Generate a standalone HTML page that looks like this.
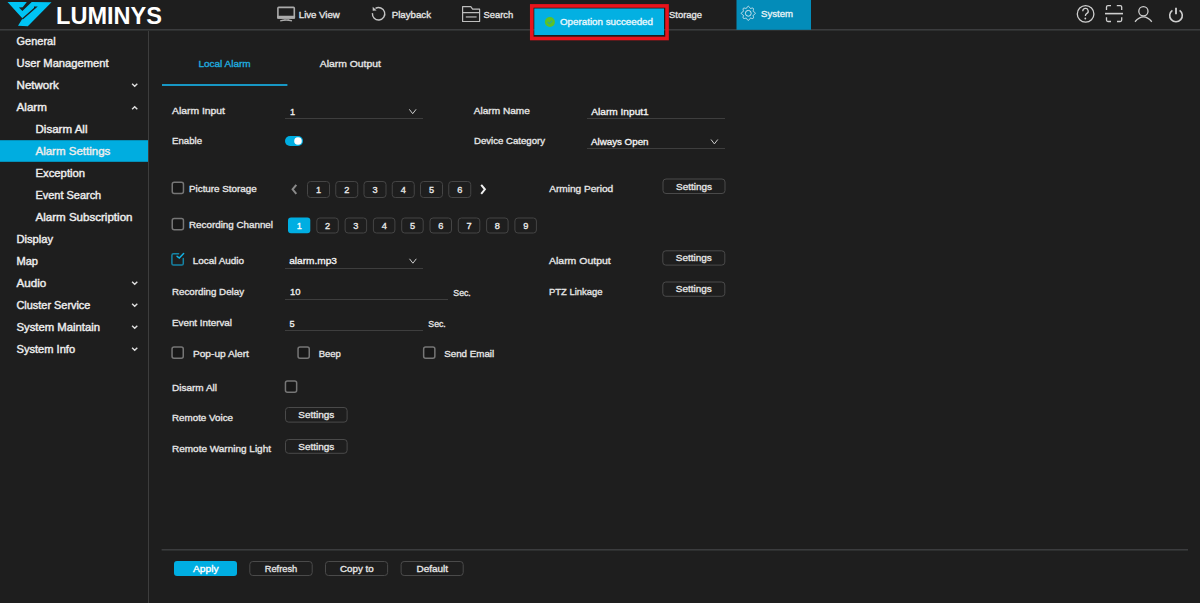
<!DOCTYPE html>
<html><head><meta charset="utf-8"><title>Alarm Settings</title>
<style>html,body{margin:0;padding:0;background:#1e1e1e;overflow:hidden;width:1200px;height:603px}
svg{display:block} text{font-family:"Liberation Sans",sans-serif}</style></head>
<body><svg width="1200" height="603" viewBox="0 0 1200 603">
<rect x="0" y="0" width="1200" height="603" fill="#1e1e1e"/>
<rect x="0" y="29" width="1200" height="1" fill="#3b3c3e"/>
<rect x="0" y="30" width="1200" height="1" fill="#2d2f2f"/>
<rect x="148" y="31" width="1" height="572" fill="#3d3d3d"/>
<path d="M7.5,2.1 L26.8,2.1 L22.7,7.2 L18.9,7.4 L22.4,10.9 L31.7,2.1 L51.5,2.2 L27.8,26.3 L18,25.8 L22.5,18.6 Z" fill="#00c3f4"/>
<path d="M34,7.1 L36,7.1 L22.4,18.9" fill="none" stroke="#1e1e1e" stroke-width="1.3"/>
<text x="56" y="23.8" font-size="23.4" fill="#ffffff" textLength="106" lengthAdjust="spacingAndGlyphs" font-weight="bold">LUMINYS</text>
<g fill="none" stroke="#ababab"><rect x="277.9" y="7.4" width="16.4" height="10.6" rx="0.8" stroke-width="1.6"/><path d="M280.2,20.8 Q286.1,19.2 292,20.8" stroke-width="1.3"/></g>
<rect x="277.1" y="15.7" width="18" height="3" fill="#ababab" rx="0.8"/>
<rect x="284.2" y="18.4" width="1.6" height="1.4" fill="#9a9a9a"/>
<rect x="287.4" y="18.4" width="1.6" height="1.4" fill="#9a9a9a"/>
<text x="298.8" y="17.9" font-size="9.6" fill="#e6e6e6" textLength="41" lengthAdjust="spacingAndGlyphs" stroke="#e6e6e6" stroke-width="0.32">Live View</text>
<path d="M375.5,8.43 A6.2,6.2 0 1 1 372.43,13.15" fill="none" stroke="#c4c4c4" stroke-width="1.4"/>
<path d="M372.7,6.8 L372.7,10.8 L376.6,10.5 Z" fill="#c4c4c4"/>
<text x="391.7" y="17.9" font-size="9.6" fill="#e6e6e6" textLength="39.3" lengthAdjust="spacingAndGlyphs" stroke="#e6e6e6" stroke-width="0.32">Playback</text>
<path d="M462.6,21.5 L462.6,6.6 L470.8,6.6 L472.6,9.2 L479.6,9.2 L479.6,21.5 Z M462.6,12.6 L479.6,12.6" fill="none" stroke="#bdbdbd" stroke-width="1.2" stroke-linejoin="round"/>
<rect x="465.8" y="16.3" width="10.8" height="1.3" fill="#b0b0b0"/>
<text x="483.5" y="17.9" font-size="9.6" fill="#e6e6e6" textLength="29.8" lengthAdjust="spacingAndGlyphs" stroke="#e6e6e6" stroke-width="0.32">Search</text>
<text x="669" y="17.8" font-size="9.6" fill="#e6e6e6" textLength="33" lengthAdjust="spacingAndGlyphs" stroke="#e6e6e6" stroke-width="0.32">Storage</text>
<rect x="736.5" y="0" width="74.5" height="29.8" fill="#038cb9"/>
<g fill="none" stroke="#cfe6ef" stroke-width="1"><circle cx="748.3" cy="13.3" r="2.9"/><path d="M755.30,13.30 L755.17,13.75 L754.82,14.16 L754.33,14.50 L753.83,14.78 L753.43,15.04 L753.20,15.33 L753.16,15.69 L753.26,16.16 L753.41,16.72 L753.52,17.30 L753.48,17.84 L753.25,18.25 L752.84,18.48 L752.30,18.52 L751.72,18.41 L751.16,18.26 L750.69,18.16 L750.33,18.20 L750.04,18.43 L749.78,18.83 L749.50,19.33 L749.16,19.82 L748.75,20.17 L748.30,20.30 L747.85,20.17 L747.44,19.82 L747.10,19.33 L746.82,18.83 L746.56,18.43 L746.27,18.20 L745.91,18.16 L745.44,18.26 L744.88,18.41 L744.30,18.52 L743.76,18.48 L743.35,18.25 L743.12,17.84 L743.08,17.30 L743.19,16.72 L743.34,16.16 L743.44,15.69 L743.40,15.33 L743.17,15.04 L742.77,14.78 L742.27,14.50 L741.78,14.16 L741.43,13.75 L741.30,13.30 L741.43,12.85 L741.78,12.44 L742.27,12.10 L742.77,11.82 L743.17,11.56 L743.40,11.27 L743.44,10.91 L743.34,10.44 L743.19,9.88 L743.08,9.30 L743.12,8.76 L743.35,8.35 L743.76,8.12 L744.30,8.08 L744.88,8.19 L745.44,8.34 L745.91,8.44 L746.27,8.40 L746.56,8.17 L746.82,7.77 L747.10,7.27 L747.44,6.78 L747.85,6.43 L748.30,6.30 L748.75,6.43 L749.16,6.78 L749.50,7.27 L749.78,7.77 L750.04,8.17 L750.33,8.40 L750.69,8.44 L751.16,8.34 L751.72,8.19 L752.30,8.08 L752.84,8.12 L753.25,8.35 L753.48,8.76 L753.52,9.30 L753.41,9.88 L753.26,10.44 L753.16,10.91 L753.20,11.27 L753.43,11.56 L753.83,11.82 L754.33,12.10 L754.82,12.44 L755.17,12.85 Z"/></g>
<text x="761" y="17.4" font-size="9.4" fill="#e8f4f8" textLength="32" lengthAdjust="spacingAndGlyphs" stroke="#e8f4f8" stroke-width="0.32">System</text>
<rect x="531.75" y="5.9" width="135.3" height="32.6" fill="none" stroke="#e8141c" stroke-width="3.6"/>
<rect x="534.3" y="8.5" width="129.7" height="26.5" fill="#03b0e2"/>
<circle cx="549.9" cy="22" r="5" fill="#5cc227"/>
<path d="M547.6,21.9 L549.4,23.7 L552.3,20.6" fill="none" stroke="#2aa8a0" stroke-width="1.1"/>
<text x="560" y="24.7" font-size="9.0" fill="#eaf8fd" textLength="93" lengthAdjust="spacingAndGlyphs" stroke="#eaf8fd" stroke-width="0.32">Operation succeeded</text>
<g fill="none" stroke="#cfcfcf" stroke-width="1.3"><circle cx="1085.6" cy="13.9" r="8.3"/><path d="M1082.8,11.3 A2.7,2.7 0 1 1 1086.6,13.6 C1085.4,14.4 1085.4,15 1085.4,16"/><path d="M1106.5,10 L1106.5,7 Q1106.5,5.6 1108,5.6 L1111,5.6 M1116.8,5.6 L1120.2,5.6 Q1121.7,5.6 1121.7,7 L1121.7,10 M1121.7,17.2 L1121.7,20 Q1121.7,21.5 1120.2,21.5 L1117,21.5 M1111,21.5 L1108,21.5 Q1106.5,21.5 1106.5,20 L1106.5,17.2"/><path d="M1105,13.6 L1123,13.6" stroke-width="1.6"/><circle cx="1143.4" cy="11.2" r="4.6"/><path d="M1135,21.7 Q1143.4,12 1151.8,21.7"/><path d="M1179.6,10.3 A6.3,6.3 0 1 1 1172.4,10.3" stroke-width="1.6"/><path d="M1176,7.8 L1176,14.2" stroke-width="1.8"/></g>
<circle cx="1085.3" cy="18.5" r="0.9" fill="#cfcfcf"/>
<rect x="0" y="140.2" width="148" height="21.6" fill="#00ade0"/>
<text x="16.6" y="44.9" font-size="10" fill="#ededed" textLength="39" lengthAdjust="spacingAndGlyphs" stroke="#ededed" stroke-width="0.38">General</text>
<text x="16.6" y="66.9" font-size="10" fill="#ededed" textLength="92" lengthAdjust="spacingAndGlyphs" stroke="#ededed" stroke-width="0.38">User Management</text>
<text x="16.6" y="88.9" font-size="10" fill="#ededed" textLength="42.3" lengthAdjust="spacingAndGlyphs" stroke="#ededed" stroke-width="0.38">Network</text>
<text x="16.6" y="110.9" font-size="10" fill="#ededed" textLength="30.3" lengthAdjust="spacingAndGlyphs" stroke="#ededed" stroke-width="0.38">Alarm</text>
<text x="35.5" y="132.9" font-size="10" fill="#ededed" textLength="52" lengthAdjust="spacingAndGlyphs" stroke="#ededed" stroke-width="0.38">Disarm All</text>
<text x="35.5" y="154.9" font-size="10" fill="#ededed" textLength="74.8" lengthAdjust="spacingAndGlyphs" stroke="#ededed" stroke-width="0.38">Alarm Settings</text>
<text x="35.5" y="176.9" font-size="10" fill="#ededed" textLength="49.6" lengthAdjust="spacingAndGlyphs" stroke="#ededed" stroke-width="0.38">Exception</text>
<text x="35.5" y="198.9" font-size="10" fill="#ededed" textLength="65.7" lengthAdjust="spacingAndGlyphs" stroke="#ededed" stroke-width="0.38">Event Search</text>
<text x="35.5" y="220.9" font-size="10" fill="#ededed" textLength="97" lengthAdjust="spacingAndGlyphs" stroke="#ededed" stroke-width="0.38">Alarm Subscription</text>
<text x="16.5" y="242.9" font-size="10" fill="#ededed" textLength="36.6" lengthAdjust="spacingAndGlyphs" stroke="#ededed" stroke-width="0.38">Display</text>
<text x="16.5" y="264.9" font-size="10" fill="#ededed" textLength="21.5" lengthAdjust="spacingAndGlyphs" stroke="#ededed" stroke-width="0.38">Map</text>
<text x="16.5" y="286.9" font-size="10" fill="#ededed" textLength="29.7" lengthAdjust="spacingAndGlyphs" stroke="#ededed" stroke-width="0.38">Audio</text>
<text x="16.5" y="308.9" font-size="10" fill="#ededed" textLength="73.9" lengthAdjust="spacingAndGlyphs" stroke="#ededed" stroke-width="0.38">Cluster Service</text>
<text x="16.5" y="330.9" font-size="10" fill="#ededed" textLength="83.6" lengthAdjust="spacingAndGlyphs" stroke="#ededed" stroke-width="0.38">System Maintain</text>
<text x="16.5" y="352.9" font-size="10" fill="#ededed" textLength="58.6" lengthAdjust="spacingAndGlyphs" stroke="#ededed" stroke-width="0.38">System Info</text>
<path d="M132.1,83.7 L134.7,86.3 L137.29999999999998,83.7" fill="none" stroke="#e0e0e0" stroke-width="1.4"/>
<path d="M132.1,109.3 L134.7,106.7 L137.29999999999998,109.3" fill="none" stroke="#e0e0e0" stroke-width="1.4"/>
<path d="M132.1,281.7 L134.7,284.3 L137.29999999999998,281.7" fill="none" stroke="#e0e0e0" stroke-width="1.4"/>
<path d="M132.1,303.7 L134.7,306.3 L137.29999999999998,303.7" fill="none" stroke="#e0e0e0" stroke-width="1.4"/>
<path d="M132.1,325.7 L134.7,328.3 L137.29999999999998,325.7" fill="none" stroke="#e0e0e0" stroke-width="1.4"/>
<path d="M132.1,347.7 L134.7,350.3 L137.29999999999998,347.7" fill="none" stroke="#e0e0e0" stroke-width="1.4"/>
<text x="198.4" y="66.9" font-size="9.2" fill="#20a9dd" textLength="52.3" lengthAdjust="spacingAndGlyphs" stroke="#20a9dd" stroke-width="0.36">Local Alarm</text>
<rect x="162" y="84" width="125.4" height="2" fill="#1797c4"/>
<text x="319.75" y="67.25" font-size="9.2" fill="#e6e6e6" textLength="61.1" lengthAdjust="spacingAndGlyphs" stroke="#e6e6e6" stroke-width="0.32">Alarm Output</text>
<text x="172" y="114" font-size="9.2" fill="#e6e6e6" textLength="53" lengthAdjust="spacingAndGlyphs" stroke="#e6e6e6" stroke-width="0.32">Alarm Input</text>
<text x="290" y="114.7" font-size="9.2" fill="#f2f2f2" stroke="#f2f2f2" stroke-width="0.32">1</text>
<rect x="285" y="118" width="138" height="1" fill="#3e3e3e"/>
<path d="M409.3,109.3 L412.7,113.7 L416.1,109.3" fill="none" stroke="#cfcfcf" stroke-width="1"/>
<text x="473.8" y="113.8" font-size="9.2" fill="#e6e6e6" textLength="56" lengthAdjust="spacingAndGlyphs" stroke="#e6e6e6" stroke-width="0.32">Alarm Name</text>
<text x="591.25" y="114.5" font-size="9.2" fill="#f2f2f2" textLength="57.5" lengthAdjust="spacingAndGlyphs" stroke="#f2f2f2" stroke-width="0.32">Alarm Input1</text>
<rect x="587" y="118" width="138" height="1" fill="#3e3e3e"/>
<text x="172" y="144.1" font-size="9.2" fill="#e6e6e6" textLength="30" lengthAdjust="spacingAndGlyphs" stroke="#e6e6e6" stroke-width="0.32">Enable</text>
<rect x="285" y="136" width="18" height="10" fill="#00aee2" rx="5"/>
<circle cx="298" cy="141" r="3.8" fill="#ffffff"/>
<text x="474" y="143.8" font-size="9.2" fill="#e6e6e6" textLength="71" lengthAdjust="spacingAndGlyphs" stroke="#e6e6e6" stroke-width="0.32">Device Category</text>
<text x="591" y="144.5" font-size="9.2" fill="#f2f2f2" textLength="57.5" lengthAdjust="spacingAndGlyphs" stroke="#f2f2f2" stroke-width="0.32">Always Open</text>
<rect x="587" y="148" width="138" height="1" fill="#3e3e3e"/>
<path d="M711,139.5 L714.4,143.9 L717.8,139.5" fill="none" stroke="#cfcfcf" stroke-width="1"/>
<rect x="172.25" y="182.25" width="11.2" height="11.2" fill="#181818" rx="2" stroke="#767676" stroke-width="1.5"/>
<text x="189" y="192" font-size="9.2" fill="#e6e6e6" textLength="67.7" lengthAdjust="spacingAndGlyphs" stroke="#e6e6e6" stroke-width="0.32">Picture Storage</text>
<path d="M296.3,184.8 L292.6,189.3 L296.3,193.8" fill="none" stroke="#8a8a8a" stroke-width="2"/>
<rect x="307.5" y="181.5" width="22" height="16" fill="#1e1e1e" rx="3" stroke="#454545" stroke-width="1"/>
<text x="318.5" y="192.7" font-size="9.2" fill="#ececec" stroke="#ececec" stroke-width="0.32" text-anchor="middle">1</text>
<rect x="335.75" y="181.5" width="22" height="16" fill="#1e1e1e" rx="3" stroke="#454545" stroke-width="1"/>
<text x="346.75" y="192.7" font-size="9.2" fill="#ececec" stroke="#ececec" stroke-width="0.32" text-anchor="middle">2</text>
<rect x="364.0" y="181.5" width="22" height="16" fill="#1e1e1e" rx="3" stroke="#454545" stroke-width="1"/>
<text x="375.0" y="192.7" font-size="9.2" fill="#ececec" stroke="#ececec" stroke-width="0.32" text-anchor="middle">3</text>
<rect x="392.25" y="181.5" width="22" height="16" fill="#1e1e1e" rx="3" stroke="#454545" stroke-width="1"/>
<text x="403.25" y="192.7" font-size="9.2" fill="#ececec" stroke="#ececec" stroke-width="0.32" text-anchor="middle">4</text>
<rect x="420.5" y="181.5" width="22" height="16" fill="#1e1e1e" rx="3" stroke="#454545" stroke-width="1"/>
<text x="431.5" y="192.7" font-size="9.2" fill="#ececec" stroke="#ececec" stroke-width="0.32" text-anchor="middle">5</text>
<rect x="448.75" y="181.5" width="22" height="16" fill="#1e1e1e" rx="3" stroke="#454545" stroke-width="1"/>
<text x="459.75" y="192.7" font-size="9.2" fill="#ececec" stroke="#ececec" stroke-width="0.32" text-anchor="middle">6</text>
<path d="M481.2,184.8 L484.9,189.3 L481.2,193.8" fill="none" stroke="#f0f0f0" stroke-width="2"/>
<text x="549.2" y="192" font-size="9.2" fill="#e6e6e6" textLength="64" lengthAdjust="spacingAndGlyphs" stroke="#e6e6e6" stroke-width="0.32">Arming Period</text>
<rect x="663.0" y="179.0" width="62" height="14.5" fill="#1e1e1e" rx="3" stroke="#4a4a4a" stroke-width="1"/>
<text x="676.0" y="189.5" font-size="9.2" fill="#e6e6e6" textLength="36" lengthAdjust="spacingAndGlyphs" stroke="#e6e6e6" stroke-width="0.32">Settings</text>
<rect x="172.25" y="218.55" width="11.2" height="11.2" fill="#181818" rx="2" stroke="#767676" stroke-width="1.5"/>
<text x="189" y="227.7" font-size="9.2" fill="#e6e6e6" textLength="84" lengthAdjust="spacingAndGlyphs" stroke="#e6e6e6" stroke-width="0.32">Recording Channel</text>
<rect x="288.0" y="217.6" width="22.3" height="15.6" fill="#00aee2" rx="3"/>
<text x="299.3" y="229" font-size="9.2" fill="#ffffff" stroke="#ffffff" stroke-width="0.32" text-anchor="middle">1</text>
<rect x="316.8" y="218" width="21.5" height="15" fill="#1e1e1e" rx="3" stroke="#454545" stroke-width="1"/>
<text x="327.6" y="229" font-size="9.2" fill="#ececec" stroke="#ececec" stroke-width="0.32" text-anchor="middle">2</text>
<rect x="345.1" y="218" width="21.5" height="15" fill="#1e1e1e" rx="3" stroke="#454545" stroke-width="1"/>
<text x="355.9" y="229" font-size="9.2" fill="#ececec" stroke="#ececec" stroke-width="0.32" text-anchor="middle">3</text>
<rect x="373.4" y="218" width="21.5" height="15" fill="#1e1e1e" rx="3" stroke="#454545" stroke-width="1"/>
<text x="384.2" y="229" font-size="9.2" fill="#ececec" stroke="#ececec" stroke-width="0.32" text-anchor="middle">4</text>
<rect x="401.7" y="218" width="21.5" height="15" fill="#1e1e1e" rx="3" stroke="#454545" stroke-width="1"/>
<text x="412.5" y="229" font-size="9.2" fill="#ececec" stroke="#ececec" stroke-width="0.32" text-anchor="middle">5</text>
<rect x="430.0" y="218" width="21.5" height="15" fill="#1e1e1e" rx="3" stroke="#454545" stroke-width="1"/>
<text x="440.8" y="229" font-size="9.2" fill="#ececec" stroke="#ececec" stroke-width="0.32" text-anchor="middle">6</text>
<rect x="458.3" y="218" width="21.5" height="15" fill="#1e1e1e" rx="3" stroke="#454545" stroke-width="1"/>
<text x="469.1" y="229" font-size="9.2" fill="#ececec" stroke="#ececec" stroke-width="0.32" text-anchor="middle">7</text>
<rect x="486.6" y="218" width="21.5" height="15" fill="#1e1e1e" rx="3" stroke="#454545" stroke-width="1"/>
<text x="497.4" y="229" font-size="9.2" fill="#ececec" stroke="#ececec" stroke-width="0.32" text-anchor="middle">8</text>
<rect x="514.9" y="218" width="21.5" height="15" fill="#1e1e1e" rx="3" stroke="#454545" stroke-width="1"/>
<text x="525.7" y="229" font-size="9.2" fill="#ececec" stroke="#ececec" stroke-width="0.32" text-anchor="middle">9</text>
<g fill="none" stroke-linecap="round"><path d="M178.6,253.8 L173.5,253.8 Q171.9,253.8 171.9,255.4 L171.9,263.4 Q171.9,265 173.5,265 L181.7,265 Q183.3,265 183.3,263.4 L183.3,258.4" stroke="#1684a6" stroke-width="1.5"/><path d="M177.1,256.3 L179.3,258 L183.6,253.5" stroke="#12b2e4" stroke-width="1.5"/></g>
<text x="192.8" y="263.7" font-size="9.2" fill="#e6e6e6" textLength="51.3" lengthAdjust="spacingAndGlyphs" stroke="#e6e6e6" stroke-width="0.32">Local Audio</text>
<text x="289.2" y="264.3" font-size="9.2" fill="#f2f2f2" textLength="47.8" lengthAdjust="spacingAndGlyphs" stroke="#f2f2f2" stroke-width="0.32">alarm.mp3</text>
<rect x="285" y="268" width="138" height="1" fill="#3e3e3e"/>
<path d="M409.5,258.8 L412.9,263.2 L416.3,258.8" fill="none" stroke="#cfcfcf" stroke-width="1"/>
<text x="549" y="263.7" font-size="9.2" fill="#e6e6e6" textLength="61.7" lengthAdjust="spacingAndGlyphs" stroke="#e6e6e6" stroke-width="0.32">Alarm Output</text>
<rect x="662.8" y="250.8" width="62" height="14.3" fill="#1e1e1e" rx="3" stroke="#4a4a4a" stroke-width="1"/>
<text x="675.8" y="261" font-size="9.2" fill="#e6e6e6" textLength="36" lengthAdjust="spacingAndGlyphs" stroke="#e6e6e6" stroke-width="0.32">Settings</text>
<text x="172" y="295" font-size="9.2" fill="#e6e6e6" textLength="72" lengthAdjust="spacingAndGlyphs" stroke="#e6e6e6" stroke-width="0.32">Recording Delay</text>
<text x="290" y="295.4" font-size="9.2" fill="#f2f2f2" textLength="10.5" lengthAdjust="spacingAndGlyphs" stroke="#f2f2f2" stroke-width="0.32">10</text>
<rect x="285" y="299" width="163" height="1" fill="#3e3e3e"/>
<text x="453.3" y="295.5" font-size="9.2" fill="#e6e6e6" textLength="17.5" lengthAdjust="spacingAndGlyphs" stroke="#e6e6e6" stroke-width="0.32">Sec.</text>
<text x="549" y="294.6" font-size="9.2" fill="#e6e6e6" textLength="53.5" lengthAdjust="spacingAndGlyphs" stroke="#e6e6e6" stroke-width="0.32">PTZ Linkage</text>
<rect x="662.8" y="282.0" width="62" height="14.3" fill="#1e1e1e" rx="3" stroke="#4a4a4a" stroke-width="1"/>
<text x="675.8" y="292.4" font-size="9.2" fill="#e6e6e6" textLength="36" lengthAdjust="spacingAndGlyphs" stroke="#e6e6e6" stroke-width="0.32">Settings</text>
<text x="172" y="326.25" font-size="9.2" fill="#e6e6e6" textLength="60" lengthAdjust="spacingAndGlyphs" stroke="#e6e6e6" stroke-width="0.32">Event Interval</text>
<text x="289.5" y="326.7" font-size="9.2" fill="#f2f2f2" stroke="#f2f2f2" stroke-width="0.32">5</text>
<rect x="285" y="330" width="138" height="1" fill="#3e3e3e"/>
<text x="428.3" y="326.7" font-size="9.2" fill="#e6e6e6" textLength="17.5" lengthAdjust="spacingAndGlyphs" stroke="#e6e6e6" stroke-width="0.32">Sec.</text>
<rect x="172.05" y="347.05" width="11.2" height="11.2" fill="#181818" rx="2" stroke="#767676" stroke-width="1.5"/>
<text x="192.9" y="356.8" font-size="9.2" fill="#e6e6e6" textLength="56" lengthAdjust="spacingAndGlyphs" stroke="#e6e6e6" stroke-width="0.32">Pop-up Alert</text>
<rect x="298.05" y="347.05" width="11.2" height="11.2" fill="#181818" rx="2" stroke="#767676" stroke-width="1.5"/>
<text x="318.7" y="356.8" font-size="9.2" fill="#e6e6e6" textLength="22.2" lengthAdjust="spacingAndGlyphs" stroke="#e6e6e6" stroke-width="0.32">Beep</text>
<rect x="423.65" y="347.05" width="11.2" height="11.2" fill="#181818" rx="2" stroke="#767676" stroke-width="1.5"/>
<text x="444.2" y="356.8" font-size="9.2" fill="#e6e6e6" textLength="50" lengthAdjust="spacingAndGlyphs" stroke="#e6e6e6" stroke-width="0.32">Send Email</text>
<text x="172" y="390.6" font-size="9.2" fill="#e6e6e6" textLength="45" lengthAdjust="spacingAndGlyphs" stroke="#e6e6e6" stroke-width="0.32">Disarm All</text>
<rect x="285.45" y="380.95" width="11.2" height="11.2" fill="#181818" rx="2" stroke="#767676" stroke-width="1.5"/>
<text x="172" y="421" font-size="9.2" fill="#e6e6e6" textLength="61" lengthAdjust="spacingAndGlyphs" stroke="#e6e6e6" stroke-width="0.32">Remote Voice</text>
<rect x="285.5" y="407.5" width="61.6" height="14.6" fill="#1e1e1e" rx="3" stroke="#4a4a4a" stroke-width="1"/>
<text x="298.3" y="418" font-size="9.2" fill="#e6e6e6" textLength="36" lengthAdjust="spacingAndGlyphs" stroke="#e6e6e6" stroke-width="0.32">Settings</text>
<text x="172" y="452.4" font-size="9.2" fill="#e6e6e6" textLength="99" lengthAdjust="spacingAndGlyphs" stroke="#e6e6e6" stroke-width="0.32">Remote Warning Light</text>
<rect x="285.5" y="439.5" width="61.6" height="13.8" fill="#1e1e1e" rx="3" stroke="#4a4a4a" stroke-width="1"/>
<text x="298.3" y="449.6" font-size="9.2" fill="#e6e6e6" textLength="36" lengthAdjust="spacingAndGlyphs" stroke="#e6e6e6" stroke-width="0.32">Settings</text>
<rect x="161.6" y="549" width="1026.4" height="1" fill="#3b3c3e"/>
<rect x="161.6" y="550" width="1026.4" height="1" fill="#2d2f2f"/>
<rect x="174" y="561" width="63" height="15" fill="#00aee2" rx="3"/>
<text x="193" y="571.8" font-size="9.2" fill="#ffffff" textLength="25.7" lengthAdjust="spacingAndGlyphs" stroke="#ffffff" stroke-width="0.32">Apply</text>
<rect x="249.8" y="561.5" width="62.4" height="14" fill="#1e1e1e" rx="3" stroke="#4a4a4a" stroke-width="1"/>
<text x="264.7" y="571.8" font-size="9.2" fill="#e6e6e6" textLength="32.6" lengthAdjust="spacingAndGlyphs" stroke="#e6e6e6" stroke-width="0.32">Refresh</text>
<rect x="325.5" y="561.5" width="62.1" height="14" fill="#1e1e1e" rx="3" stroke="#4a4a4a" stroke-width="1"/>
<text x="340" y="571.9" font-size="9.2" fill="#e6e6e6" textLength="33.75" lengthAdjust="spacingAndGlyphs" stroke="#e6e6e6" stroke-width="0.32">Copy to</text>
<rect x="401.1" y="561.5" width="62.1" height="14" fill="#1e1e1e" rx="3" stroke="#4a4a4a" stroke-width="1"/>
<text x="416.5" y="571.9" font-size="9.2" fill="#e6e6e6" textLength="31.6" lengthAdjust="spacingAndGlyphs" stroke="#e6e6e6" stroke-width="0.32">Default</text>
</svg></body></html>
